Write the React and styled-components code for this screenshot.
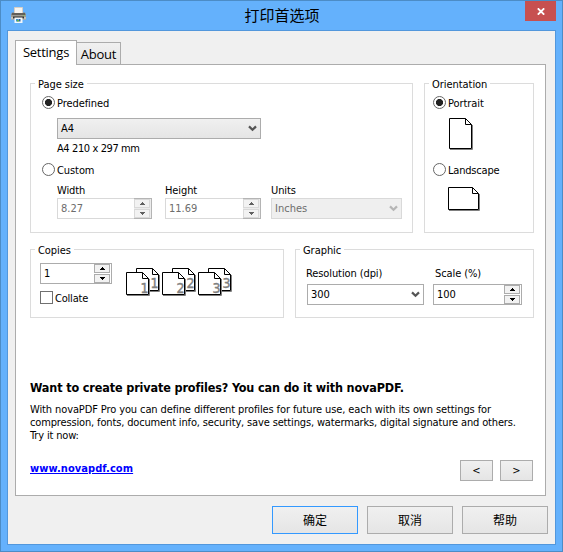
import React from "react";
import styled, { createGlobalStyle } from "styled-components";

const UI_FONT = '"DejaVu Sans Condensed", "DejaVu Sans", sans-serif';
const CJK_FONT = '"Noto Sans CJK SC", sans-serif';

const GlobalStyle = createGlobalStyle`
  * { box-sizing: border-box; }
  body { margin: 0; font: 11px/13px ${UI_FONT}; color: #000; }
  button, input { font: inherit; color: inherit; margin: 0; padding: 0; border-radius: 0; }
  svg { display: block; flex: none; }
`;

const Window = styled.div`
  width: 563px;
  height: 552px;
  display: flex;
  flex-direction: column;
  background: #64b1fc;
  border: 1px solid #4c8cc6;
`;

const TitleBar = styled.header`
  flex: none;
  height: 29px;
  display: grid;
  grid-template-columns: 1fr auto 1fr;
  padding: 0 7px 0 8px;
`;

const AppIcon = styled.span`
  margin: 6px 0 0 1px;
`;

const Title = styled.h1`
  margin: 0;
  font: 15px/27px ${CJK_FONT};
`;

const CloseButton = styled.button`
  justify-self: end;
  width: 31px;
  height: 20px;
  margin-right: -1px;
  display: grid;
  place-items: center;
  border: 0;
  background: #c75050;
`;

const Client = styled.main`
  flex: none;
  width: 549px;
  height: 515px;
  margin-left: 6px;
  padding: 9px 7px 0;
  display: flex;
  flex-direction: column;
  background: #f0f0f0;
  border: 1px solid #5297dc;
`;

const TabStrip = styled.nav`
  flex: none;
  display: flex;
  align-items: flex-end;
  height: 24px;
`;

const Tab = styled.button`
  position: relative;
  z-index: ${(p) => (p.$active ? 1 : 0)};
  width: ${(p) => (p.$active ? 62 : 44)}px;
  height: ${(p) => (p.$active ? 25 : 22)}px;
  margin-bottom: ${(p) => (p.$active ? -1 : 0)}px;
  padding-bottom: ${(p) => (p.$active ? 2 : 0)}px;
  border: 1px solid #acacac;
  border-bottom: 0;
  border-left-width: ${(p) => (p.$active ? 1 : 0)}px;
  background: ${(p) => (p.$active ? "#fff" : "linear-gradient(#f0f0f0, #e6e6e6)")};
  font: 13px/20px "Open Sans", sans-serif;
  letter-spacing: -0.25px;
  white-space: nowrap;
`;

const Panel = styled.section`
  flex: none;
  width: 531px;
  height: 432px;
  padding: 18px 0 0 14px;
  display: flex;
  flex-direction: column;
  background: #fff;
  border: 1px solid #acacac;
`;

const GroupRow = styled.div`
  display: flex;
  gap: 11px;
  margin-bottom: ${(p) => p.$after}px;
`;

const Group = styled.section`
  width: ${(p) => p.$width}px;
  height: ${(p) => p.$height}px;
  display: flex;
  flex-direction: column;
  align-items: flex-start;
  border: 1px solid #dcdcdc;
`;

const GroupTitle = styled.h2`
  margin: -7px 0 0 4px;
  padding: 0 3px;
  height: 13px;
  background: #fff;
  font: inherit;
  line-height: 15px;
  letter-spacing: -0.05px;
`;

const Choice = styled.label`
  display: flex;
  gap: 2px;
  height: 13px;
  line-height: 15px;
  margin: ${(p) => p.$top}px 0 0 ${(p) => p.$left}px;
  letter-spacing: ${(p) => p.$spacing || -0.08}px;
  white-space: nowrap;
`;

const RadioDot = styled.span`
  width: 13px;
  height: 13px;
  border: 1px solid #666;
  border-radius: 50%;
  background: ${(p) => (p.$on ? "radial-gradient(circle, #222 3.2px, #fff 3.9px)" : "#fff")};
`;

const CheckSquare = styled.span`
  width: 13px;
  height: 13px;
  border: 1px solid #707070;
  background: #fff;
`;

const Combo = styled.div`
  width: ${(p) => p.$width}px;
  height: 21px;
  padding: 0 3px;
  display: flex;
  align-items: center;
  justify-content: space-between;
  border: 1px solid ${(p) => (p.$disabled ? "#d9d9d9" : "#acacac")};
  background: ${(p) => (p.$disabled ? "#efefef" : p.$flat ? "#fff" : "linear-gradient(#f0f0f0, #e5e5e5)")};
  color: ${(p) => (p.$disabled ? "#6d6d6d" : "#000")};
`;

const PaperCombo = styled.div`
  margin: 9px 0 3px 26px;
`;

const PaperSize = styled.div`
  margin-left: 26px;
  letter-spacing: -0.4px;
`;

const FieldRow = styled.div`
  display: flex;
  gap: ${(p) => p.$gap}px;
  margin: ${(p) => p.$top}px 0 0 ${(p) => p.$left}px;
`;

const Field = styled.div`
  display: flex;
  flex-direction: column;
  gap: ${(p) => p.$gap}px;
`;

const UnitsField = styled(Field)`
  margin-left: -3px;
`;

const FieldLabel = styled.span`
  height: 13px;
  margin-left: ${(p) => p.$shift || 0}px;
  white-space: nowrap;
  letter-spacing: -0.1px;
`;

const SpinBox = styled.div`
  width: ${(p) => p.$width}px;
  height: 21px;
  display: flex;
  border: 1px solid ${(p) => (p.$disabled ? "#d9d9d9" : "#acacac")};
  background: #fff;
  color: ${(p) => (p.$disabled ? "#6d6d6d" : "#000")};
`;

const SpinValue = styled.span`
  flex: 1;
  padding-left: 3px;
  line-height: 19px;
`;

const SpinArrows = styled.span`
  display: flex;
  flex-direction: column;
  gap: 1px;
  width: ${(p) => (p.$disabled ? 18 : 17)}px;
  margin: ${(p) => (p.$disabled ? "-1px -1px -1px 0" : "0")};
  border: ${(p) => (p.$disabled ? "1px solid #b4b4b4" : "0 solid")};
  border-left: 0;
  padding-right: 1px;
  background: ${(p) => (p.$disabled ? "#ececec" : "#fff")};
`;

const SpinArrow = styled.button`
  flex: 1;
  display: grid;
  place-items: center;
  border: 1px solid ${(p) => (p.$disabled ? "#d9d9d9" : "#acacac")};
  background: #f2f2f2;
`;

const SheetHolder = styled.div`
  margin: ${(p) => p.$top}px 0 0 ${(p) => p.$left}px;
`;

const CopiesBody = styled.div`
  display: flex;
  gap: 14px;
  margin: 7px 0 0 9px;
`;

const CopiesFields = styled.div`
  display: flex;
  flex-direction: column;
  width: 72px;
`;

const StackRow = styled.div`
  display: flex;
  padding-top: 5px;
`;

const Headline = styled.h2`
  margin: 0 0 7px;
  font: bold 12.5px/16px ${UI_FONT};
  letter-spacing: -0.13px;
`;

const Blurb = styled.p`
  margin: 0 0 18px;
  white-space: nowrap;
`;

const BlurbLine = styled.span`
  display: block;
  letter-spacing: ${(p) => p.$spacing}px;
`;

const PanelFooter = styled.div`
  display: flex;
  align-items: flex-start;
`;

const SiteLink = styled.a`
  margin: 2px auto 0 0;
  font-weight: bold;
  color: #0000ff;
  text-decoration: underline;
  letter-spacing: 0.07px;
`;

const StepButtons = styled.div`
  display: flex;
  gap: 7px;
  margin-right: 12px;
`;

const StepButton = styled.button`
  width: 33px;
  height: 21px;
  border: 1px solid #acacac;
  background: linear-gradient(#f0f0f0, #e5e5e5);
`;

const DialogButtons = styled.footer`
  display: flex;
  justify-content: flex-end;
  gap: 9px;
  margin-top: 10px;
`;

const DialogButton = styled.button`
  width: 86px;
  height: 28px;
  border: 1px solid ${(p) => (p.$primary ? "#3399ff" : "#acacac")};
  background: linear-gradient(#f0f0f0, #e5e5e5);
  font: 12px/24px ${CJK_FONT};
`;

const Digit = styled.text`
  font: 14px "DejaVu Sans Condensed", sans-serif;
  fill: #808080;
  stroke: #808080;
  stroke-width: 0.4px;
`;

function PrinterIcon() {
  return (
    <svg width="17" height="17" viewBox="0 0 17 17">
      <path d="M4.5 .5h8v6h-8z" fill="#f7f4ef" stroke="#d6cfc6" />
      <path d="M2 5.5h2v1h9v-1h2l1 2v5H1v-5z" fill="#8b8881" />
      <path d="M2 6h13v2H2z" fill="#625f59" />
      <path d="M1 8h15v2H1z" fill="#9f9c94" />
      <path d="M1 10h15v2.5H1z" fill="#c3c0b8" />
      <path d="M3 9.5h11v2H3z" fill="#33322f" />
      <path d="M13.5 8h1v1h-1z" fill="#7fd34b" />
      <path d="M4.5 10.5h8V16h-8z" fill="#f2f7fb" />
      <path d="M6 12h2v2.5H6z" fill="#3d93c8" />
      <path d="M8.5 12h2v2.5h-2z" fill="#2a5f9e" />
      <path d="M7 13h2v1.5H7z" fill="#63b04c" />
    </svg>
  );
}

function Chevron({ color = "#555" }) {
  return (
    <svg width="9" height="7" viewBox="0 0 9 7">
      <path d="M1 1.4l3.5 3.4L8 1.4" fill="none" stroke={color} strokeWidth="2.2" />
    </svg>
  );
}

function Triangle({ down, color }) {
  return (
    <svg width="5" height="3" viewBox="0 0 5 3" shapeRendering="crispEdges">
      <path d={down ? "M0 0h5v1H4v1H3v1H2V2H1V1H0z" : "M2 0h1v1h1v1h1v1H0V2h1V1h1z"} fill={color} />
    </svg>
  );
}

function Spin({ width, value, disabled }) {
  const color = disabled ? "#606060" : "#000";
  return (
    <SpinBox $width={width} $disabled={disabled}>
      <SpinValue>{value}</SpinValue>
      <SpinArrows $disabled={disabled}>
        <SpinArrow $disabled={disabled}><Triangle color={color} /></SpinArrow>
        <SpinArrow $disabled={disabled}><Triangle down color={color} /></SpinArrow>
      </SpinArrows>
    </SpinBox>
  );
}

function Sheet({ x = 0, y = 0, w, h, fold = 6 }) {
  const r = w - 0.5;
  const b = h - 0.5;
  return (
    <g transform={`translate(${x} ${y})`}>
      <path d={`M${w + 0.5} ${fold + 1}V${h + 0.5}H1`} fill="none" stroke="#808080" />
      <path d={`M.5 .5H${r - fold}L${r} ${fold + 0.5}V${b}H.5z`} fill="#fff" stroke="#000" />
      <path d={`M${r - fold} .5V${fold + 0.5}H${r}`} fill="none" stroke="#000" />
    </g>
  );
}

function SheetIcon({ w, h }) {
  return (
    <svg width={w + 1} height={h + 1}>
      <Sheet w={w} h={h} />
    </svg>
  );
}

function CopyStack({ n }) {
  return (
    <svg width="36" height="28">
      <Sheet x={10} y={0} w={23} h={23} />
      <Digit x="24.5" y="20">{n}</Digit>
      <Sheet x={0} y={4} w={23} h={23} />
      <Digit x="14.5" y="24.5">{n}</Digit>
    </svg>
  );
}

export default function App() {
  return (
    <>
      <GlobalStyle />
      <Window>
        <TitleBar>
          <AppIcon><PrinterIcon /></AppIcon>
          <Title>打印首选项</Title>
          <CloseButton aria-label="Close">
            <svg width="8" height="7" viewBox="0 0 8 7">
              <path d="M.8 .3l6.4 6.4M7.2 .3L.8 6.7" stroke="#fff" strokeWidth="1.8" />
            </svg>
          </CloseButton>
        </TitleBar>

        <Client>
          <TabStrip>
            <Tab $active>Settings</Tab>
            <Tab>About</Tab>
          </TabStrip>

          <Panel>
            <GroupRow $after={16}>
              <Group $width={383} $height={150}>
                <GroupTitle>Page size</GroupTitle>
                <Choice $top={6} $left={11}><RadioDot $on />Predefined</Choice>
                <PaperCombo>
                  <Combo $width={204}>A4<Chevron /></Combo>
                </PaperCombo>
                <PaperSize>A4 210 x 297 mm</PaperSize>
                <Choice $top={8} $left={11}><RadioDot />Custom</Choice>
                <FieldRow $top={8} $left={26} $gap={13}>
                  <Field $gap={1}>
                    <FieldLabel>Width</FieldLabel>
                    <Spin width={95} value="8.27" disabled />
                  </Field>
                  <Field $gap={1}>
                    <FieldLabel>Height</FieldLabel>
                    <Spin width={96} value="11.69" disabled />
                  </Field>
                  <UnitsField $gap={1}>
                    <FieldLabel>Units</FieldLabel>
                    <Combo $width={131} $disabled>Inches<Chevron color="#b5b5b5" /></Combo>
                  </UnitsField>
                </FieldRow>
              </Group>

              <Group $width={110} $height={150}>
                <GroupTitle>Orientation</GroupTitle>
                <Choice $top={6} $left={8}><RadioDot $on />Portrait</Choice>
                <SheetHolder $top={9} $left={24}><SheetIcon w={23} h={31} /></SheetHolder>
                <Choice $top={13} $left={8} $spacing={-0.2}><RadioDot />Landscape</Choice>
                <SheetHolder $top={11} $left={23}><SheetIcon w={31} h={23} /></SheetHolder>
              </Group>
            </GroupRow>

            <GroupRow $after={62}>
              <Group $width={254} $height={69}>
                <GroupTitle>Copies</GroupTitle>
                <CopiesBody>
                  <CopiesFields>
                    <Spin width={72} value="1" />
                    <Choice $top={7} $left={0} $spacing={-0.2}><CheckSquare />Collate</Choice>
                  </CopiesFields>
                  <StackRow>
                    <CopyStack n="1" />
                    <CopyStack n="2" />
                    <CopyStack n="3" />
                  </StackRow>
                </CopiesBody>
              </Group>

              <Group $width={239} $height={69}>
                <GroupTitle>Graphic</GroupTitle>
                <FieldRow $top={11} $left={11} $gap={9}>
                  <Field $gap={4}>
                    <FieldLabel $shift={-1}>Resolution (dpi)</FieldLabel>
                    <Combo $width={117} $flat>300<Chevron /></Combo>
                  </Field>
                  <Field $gap={4}>
                    <FieldLabel $shift={2}>Scale (%)</FieldLabel>
                    <Spin width={89} value="100" />
                  </Field>
                </FieldRow>
              </Group>
            </GroupRow>

            <Headline>Want to create private profiles? You can do it with novaPDF.</Headline>
            <Blurb>
              <BlurbLine $spacing={-0.11}>With novaPDF Pro you can define different profiles for future use, each with its own settings for</BlurbLine>
              <BlurbLine $spacing={-0.15}>compression, fonts, document info, security, save settings, watermarks, digital signature and others.</BlurbLine>
              <BlurbLine $spacing={-0.15}>Try it now:</BlurbLine>
            </Blurb>

            <PanelFooter>
              <SiteLink>www.novapdf.com</SiteLink>
              <StepButtons>
                <StepButton>&lt;</StepButton>
                <StepButton>&gt;</StepButton>
              </StepButtons>
            </PanelFooter>
          </Panel>

          <DialogButtons>
            <DialogButton $primary>确定</DialogButton>
            <DialogButton>取消</DialogButton>
            <DialogButton>帮助</DialogButton>
          </DialogButtons>
        </Client>
      </Window>
    </>
  );
}
